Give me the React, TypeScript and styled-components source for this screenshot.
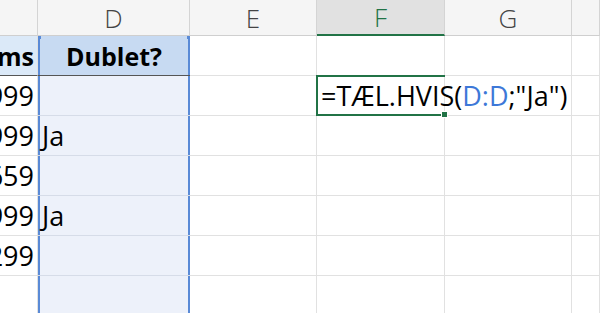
import styled, { createGlobalStyle, css } from 'styled-components';

const GlobalStyle = createGlobalStyle`
html, body {
    margin: 0;
    padding: 0;
    background: #ffffff;
}
body {
    width: 600px;
    height: 313px;
    overflow: hidden;
    font-family: "Open Sans", "Liberation Sans", sans-serif;
}
`

const cols = [38, 152, 127, 128, 127, 28];
const green = '#217346';
const blue = '#5a8ad6';

const Sheet = styled.div`
display: grid;
grid-template-columns: ${cols.map(c => `${c}px`).join(' ')};
grid-template-rows: 36px repeat(7, 40px);
width: 600px;
height: 313px;
overflow: hidden;
`

const ColHead = styled.div<{ active?: boolean }>`
display: flex;
align-items: center;
justify-content: center;
box-sizing: border-box;
background: ${p => p.active ? '#e1e1e1' : '#f5f5f5'};
border-right: 1px solid #d4d4d4;
border-bottom: ${p => p.active ? `2px solid ${green}` : '1px solid #cfcfcf'};
color: ${p => p.active ? green : '#444'};
font-size: 26px;
font-weight: 300;
`

type CellProp = {
    ref_?: boolean
    head?: boolean
    align?: 'left' | 'right' | 'center'
    bold?: boolean
    overflow?: boolean
    bottomDark?: boolean
}

const Cell = styled.div<CellProp>`
position: relative;
display: flex;
align-items: center;
justify-content: ${p => p.align === 'right' ? 'flex-end' : p.align === 'center' ? 'center' : 'flex-start'};
box-sizing: border-box;
padding: 0 ${p => p.align === 'right' ? '3px' : '4px'};
border-right: 1px solid #e1e1e1;
border-bottom: 1px solid ${p => p.bottomDark ? '#555' : '#e1e1e1'};
font-size: ${p => p.bold ? '25px' : '27px'};
font-weight: ${p => p.bold ? 700 : 400};
color: #000;
white-space: nowrap;
overflow: ${p => p.overflow ? 'visible' : 'hidden'};
z-index: ${p => p.overflow ? 2 : 0};

${p => p.head && !p.ref_ && css`background: #dbe9f8;`}

${p => p.ref_ && css`
    background: ${p.head ? '#c7daf2' : '#edf1fa'};
    border-right: none;
    border-bottom-color: ${p.bottomDark ? '#555' : '#d6dce8'};
    box-shadow: inset 2px 0 0 ${blue}, inset -2px 0 0 ${blue};
`}
`

const Handle = styled.span<{ side: 'left' | 'right' }>`
position: absolute;
top: -1px;
${p => p.side}: -1px;
width: 4px;
height: 4px;
background: ${blue};
`

const Active = styled.div`
position: absolute;
inset: -1px -1px -1px -1px;
border: 2px solid ${green};
border-right: none;
pointer-events: none;

&::after {
    content: '';
    position: absolute;
    right: -3px;
    bottom: -4px;
    width: 5px;
    height: 5px;
    background: ${green};
    border: 1px solid #fff;
}
`

const Ref = styled.span`
color: #3d78d8;
`

const cValues = ['4.999', '1.999', '3.659', '2.999', '5.299', '', ''];
const dValues = ['', 'Ja', '', 'Ja', '', '', ''];

function App() {
    return (
        <>
            <GlobalStyle />
            <Sheet>
                <ColHead />
                <ColHead>D</ColHead>
                <ColHead>E</ColHead>
                <ColHead active>F</ColHead>
                <ColHead>G</ColHead>
                <ColHead />

                <Cell head align="right" bold bottomDark>ms</Cell>
                <Cell head ref_ align="center" bold bottomDark>
                    Dublet?
                    <Handle side="left" />
                    <Handle side="right" />
                </Cell>
                <Cell />
                <Cell />
                <Cell />
                <Cell />

                {cValues.map((c, i) => (
                    <Row key={i} c={c} d={dValues[i]} first={i === 0} />
                ))}
            </Sheet>
        </>
    );
}

const Row = ({ c, d, first }: { c: string, d: string, first: boolean }) => (
    <>
        <Cell align="right">{c}</Cell>
        <Cell ref_>{d}</Cell>
        <Cell />
        {first ? (
            <Cell overflow>
                =TÆL.HVIS(<Ref>D:D</Ref>;"Ja")
                <Active />
            </Cell>
        ) : <Cell />}
        <Cell />
        <Cell />
    </>
)

export default App;
